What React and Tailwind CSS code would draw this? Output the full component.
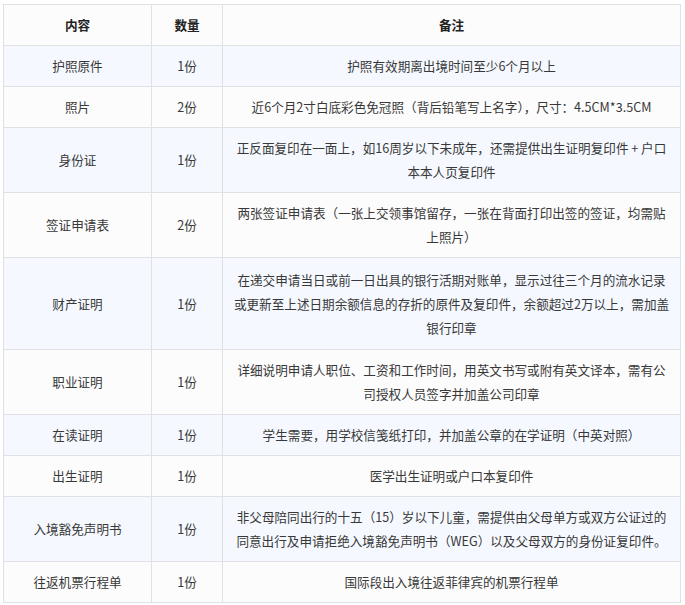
const rows = [
  { name: "护照原件", qty: "1份", note: "护照有效期离出境时间至少6个月以上" },
  { name: "照片", qty: "2份", note: "近6个月2寸白底彩色免冠照（背后铅笔写上名字），尺寸：4.5CM*3.5CM" },
  { name: "身份证", qty: "1份", note: "正反面复印在一面上，如16周岁以下未成年，还需提供出生证明复印件 + 户口\n本本人页复印件" },
  { name: "签证申请表", qty: "2份", note: "两张签证申请表（一张上交领事馆留存，一张在背面打印出签的签证，均需贴\n上照片）" },
  { name: "财产证明", qty: "1份", note: "在递交申请当日或前一日出具的银行活期对账单，显示过往三个月的流水记录\n或更新至上述日期余额信息的存折的原件及复印件，余额超过2万以上，需加盖\n银行印章", tall: true },
  { name: "职业证明", qty: "1份", note: "详细说明申请人职位、工资和工作时间，用英文书写或附有英文译本，需有公\n司授权人员签字并加盖公司印章" },
  { name: "在读证明", qty: "1份", note: "学生需要，用学校信笺纸打印，并加盖公章的在学证明（中英对照）" },
  { name: "出生证明", qty: "1份", note: "医学出生证明或户口本复印件" },
  { name: "入境豁免声明书", qty: "1份", note: "非父母陪同出行的十五（15）岁以下儿童，需提供由父母单方或双方公证过的\n同意出行及申请拒绝入境豁免声明书（WEG）以及父母双方的身份证复印件。" },
  { name: "往返机票行程单", qty: "1份", note: "国际段出入境往返菲律宾的机票行程单" },
];

export default function App() {
  return (
    <div className="min-h-[605px] w-[685px] bg-white pt-[4px] pl-[3px]" style={{ fontFamily: '"Noto Sans CJK SC", "Noto Sans", sans-serif' }}>
      <table className="w-[677px] table-fixed border-collapse text-[12.6px] leading-[24px] text-[#383838]">
        <colgroup>
          <col className="w-[148px]" />
          <col className="w-[71px]" />
          <col className="w-[458px]" />
        </colgroup>
        <thead>
          <tr className="bg-[#fcfcfc]">
            <th className="border border-[#dfe1e4] px-2 py-2 text-center font-bold text-[#222]">内容</th>
            <th className="border border-[#dfe1e4] px-2 py-2 text-center font-bold text-[#222]">数量</th>
            <th className="border border-[#dfe1e4] px-2 py-2 text-center font-bold text-[#222]">备注</th>
          </tr>
        </thead>
        <tbody>
          {rows.map((r, i) => (
            <tr key={r.name} className={(i % 2 === 0 ? "bg-[#f5f9ff]" : "bg-[#fcfcfc]") + (r.tall ? " h-[92px]" : "")}>
              <td className="border border-[#dfe1e4] px-2 py-2 text-center align-middle">{r.name}</td>
              <td className="border border-[#dfe1e4] px-2 py-2 text-center align-middle">{r.qty}</td>
              <td className="whitespace-pre-line border border-[#dfe1e4] px-1 py-2 text-center align-middle">{r.note}</td>
            </tr>
          ))}
        </tbody>
      </table>
    </div>
  );
}
